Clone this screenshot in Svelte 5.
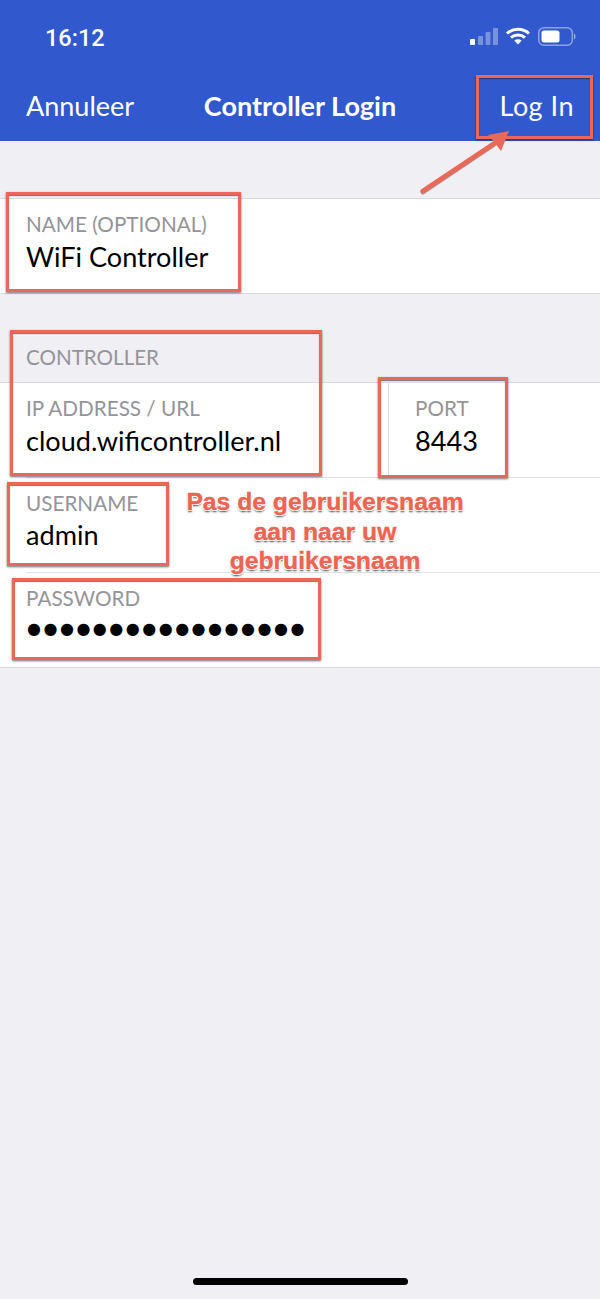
<script>
  const boxes = [
    { id: 'login', l: 476, t: 75, w: 117, h: 64 },
    { id: 'name', l: 6, t: 192, w: 235, h: 100 },
    { id: 'ctrl', l: 10, t: 330, w: 312, h: 146 },
    { id: 'port', l: 378, t: 377, w: 130, h: 101 },
    { id: 'user', l: 7, t: 482, w: 162, h: 84 },
    { id: 'pass', l: 12, t: 578, w: 309, h: 82 }
  ];
</script>

<div class="page">
  <header class="top">
    <div class="status">
      <span class="time">16:12</span>
      <div class="sysicons">
        <svg class="signal" width="28" height="17" viewBox="0 0 28 17">
          <rect x="0" y="11" width="5" height="6" rx="1" fill="#fff" />
          <rect x="8" y="8" width="5" height="9" rx="1" fill="#fff" opacity=".35" />
          <rect x="15.500" y="4" width="5" height="13" rx="1" fill="#fff" opacity=".35" />
          <rect x="23" y="0" width="5" height="17" rx="1" fill="#fff" opacity=".35" />
        </svg>
        <svg class="wifi" width="24" height="18" viewBox="0 0 24 18">
          <path d="M1 6.500C7 .8 17 .8 23 6.500" fill="none" stroke="#fff" stroke-width="3" />
          <path d="M5 10.600C9 7 15 7 19 10.600" fill="none" stroke="#fff" stroke-width="3" />
          <path d="M8.300 13.600C10.600 11.800 13.400 11.800 15.700 13.600L12 17.600Z" fill="#fff" />
        </svg>
        <svg class="battery" width="39" height="19" viewBox="0 0 39 19">
          <rect x=".75" y=".75" width="33.500" height="17.500" rx="5" fill="none" stroke="#fff" stroke-opacity=".45" stroke-width="1.500" />
          <rect x="3.500" y="3.500" width="18" height="12" rx="2.500" fill="#fff" />
          <path d="M36 6.500c2 .5 2 5.500 0 6z" fill="#fff" fill-opacity=".5" />
        </svg>
      </div>
    </div>
    <nav class="navbar">
      <span class="navlink">Annuleer</span>
      <span class="title">Controller Login</span>
      <span class="navlink end">Log In</span>
    </nav>
  </header>

  <section class="group first">
    <div class="row">
      <div class="field">
        <span class="label">NAME (OPTIONAL)</span>
        <span class="value">WiFi Controller</span>
      </div>
    </div>
  </section>

  <div class="group-heading">CONTROLLER</div>

  <section class="group">
    <div class="row split">
      <div class="field grow">
        <span class="label">IP ADDRESS / URL</span>
        <span class="value">cloud.wificontroller.nl</span>
      </div>
      <div class="field portcell">
        <span class="label">PORT</span>
        <span class="value">8443</span>
      </div>
    </div>
    <div class="row inset">
      <div class="field">
        <span class="label">USERNAME</span>
        <span class="value">admin</span>
      </div>
    </div>
    <div class="row inset">
      <div class="field">
        <span class="label">PASSWORD</span>
        <span class="value dots">●●●●●●●●●●●●●●●●●</span>
      </div>
    </div>
  </section>

  <div class="homebar"></div>

  {#each boxes as b (b.id)}
    <div class="mark" style="left:{b.l}px;top:{b.t}px;width:{b.w}px;height:{b.h}px"></div>
  {/each}

  <svg class="arrow" width="100" height="75" viewBox="0 0 100 75">
    <path d="M4 67L74 20" stroke="#333" stroke-opacity=".4" stroke-width="5" stroke-linecap="round" />
    <path d="M4 66L76 18" stroke="#e8695a" stroke-width="5" stroke-linecap="round" />
    <path d="M90 6L69 10L75 17L82 26Z" fill="#e8695a" />
  </svg>

  <div class="note">Pas de gebruikersnaam<br />aan naar uw<br />gebruikersnaam</div>
</div>

<style>
  :global(body) {
    margin: 0;
    background: #efeff4;
  }
  .page {
    position: relative;
    width: 600px;
    height: 1299px;
    overflow: hidden;
    background: #efeff4;
    font-family: Lato, "Open Sans", sans-serif;
  }
  .top {
    height: 141px;
    background: #3158cd;
    color: #fff;
    display: flex;
    flex-direction: column;
    box-sizing: border-box;
  }
  .status {
    height: 72px;
    display: flex;
    align-items: center;
    justify-content: space-between;
    padding: 0 23px 0 45px;
  }
  .time {
    font-family: Roboto, "Noto Sans", sans-serif;
    font-size: 23.500px;
    font-weight: 500;
    padding-top: 3px;
  }
  .sysicons {
    display: flex;
    align-items: center;
    gap: 8px;
  }
  .navbar {
    flex: 1;
    display: grid;
    grid-template-columns: 1fr auto 1fr;
    align-items: start;
    padding: 17px 26px 0;
    font-size: 27px;
    line-height: 34px;
  }
  .end {
    justify-self: end;
    letter-spacing: .5px;
  }
  .title {
    font-weight: 700;
    font-size: 27px;
  }
  .group {
    background: #fff;
    border-top: 1px solid #d9d9de;
    border-bottom: 1px solid #d9d9de;
  }
  .group.first {
    margin-top: 57px;
  }
  .group-heading {
    height: 88px;
    box-sizing: border-box;
    padding: 51px 26px 0;
    font-size: 20.600px;
    line-height: 24px;
    color: #949499;
  }
  .row {
    height: 94px;
    box-sizing: border-box;
    display: flex;
  }
  .row.inset {
    height: 95px;
    position: relative;
  }
  .row.inset::before {
    content: "";
    position: absolute;
    left: 26px;
    right: 0;
    top: 0;
    height: 1px;
    background: #e2e2e6;
  }
  .field {
    display: flex;
    flex-direction: column;
    padding: 13px 0 0 26px;
  }
  .inset .field {
    padding-top: 14px;
  }
  .inset .value {
    margin-top: 3px;
  }
  .grow {
    flex: 1;
  }
  .portcell {
    width: 212px;
    box-sizing: border-box;
    border-left: 1px solid #dddde1;
  }
  .label {
    font-size: 20.700px;
    line-height: 25px;
    color: #949499;
  }
  .value {
    font-size: 27.100px;
    line-height: 32px;
    margin-top: 4px;
    color: #000;
  }
  .inset .value.dots {
    font-family: "DejaVu Sans", sans-serif;
    font-size: 16px;
    letter-spacing: 2.500px;
    white-space: nowrap;
    margin-top: 2px;
    padding-left: 1px;
  }
  .homebar {
    position: absolute;
    left: 193px;
    top: 1278px;
    width: 215px;
    height: 7px;
    border-radius: 4px;
    background: #000;
  }
  .mark {
    position: absolute;
    box-sizing: border-box;
    border: 3px solid #e8695a;
    box-shadow: 0 1px 2px rgba(30, 30, 30, .65), inset 0 1px 1px rgba(30, 30, 30, .6);
  }
  .arrow {
    position: absolute;
    left: 419px;
    top: 125px;
    overflow: visible;
  }
  .note {
    position: absolute;
    left: 150px;
    top: 487px;
    width: 350px;
    text-align: center;
    font-family: "Liberation Sans", Arial, sans-serif;
    font-weight: 700;
    font-size: 24.700px;
    line-height: 29.500px;
    color: #ec6553;
    -webkit-text-stroke: .4px #ec6553;
    text-shadow: 1px 0 0 #fff, -1px 0 0 #fff, 0 -1px 0 #fff, 0 1px 0 #fff, 1px 1px 0 #fff, -1px 1px 0 #fff, 1px -1px 0 #fff, -1px -1px 0 #fff, 0 2px 2px rgba(30, 30, 30, .8);
  }
</style>
